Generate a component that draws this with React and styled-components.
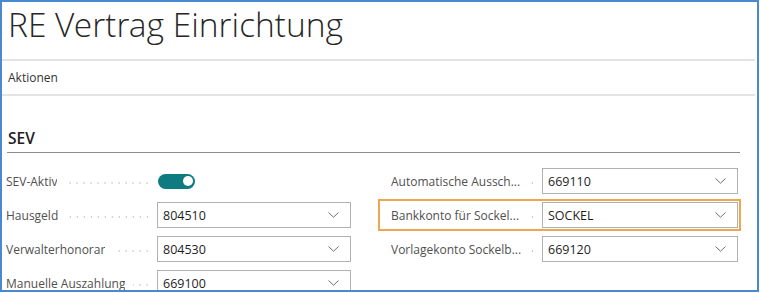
import React from 'react'
import styled, { createGlobalStyle } from 'styled-components'

const GlobalStyle = createGlobalStyle`
	html, body {
		margin: 0;
		padding: 0;
		background: #fff;
	}
	body {
		font-family: "Open Sans", "Noto Sans", Arial, sans-serif;
	}
`

const Frame = styled.div`
	box-sizing: border-box;
	width: 759px;
	height: 292px;
	border: 2px solid #4a89d0;
	background: #fff;
	overflow: hidden;
`

const Title = styled.h1`
	margin: 0;
	box-sizing: border-box;
	height: 57px;
	padding: 2px 0 0 6px;
	font-family: "Open Sans Light", "Lato Light", "Open Sans", sans-serif;
	font-size: 33.5px;
	font-weight: 300;
	line-height: 40px;
	color: #262626;
`

const Divider = styled.div`
	height: 2px;
	margin-right: 2px;
	background: #e4e4e6;
`

const ActionBar = styled.div`
	display: flex;
	align-items: center;
	height: 33px;
	padding-left: 6px;
	font-size: 12px;
	color: #333;
`

const Section = styled.section``

const SectionTitle = styled.h2`
	margin: 32px 17px 0 5px;
	padding: 0 0 4px 1px;
	font-size: 15.5px;
	font-weight: 600;
	line-height: 20px;
	color: #212121;
	border-bottom: 1px solid #8c8c8c;
`

const Fields = styled.div`
	display: grid;
	grid-template-columns: 352px 363px;
	column-gap: 24px;
	margin-top: 12px;
`

const Column = styled.div`
	display: flex;
	flex-direction: column;
	gap: 2px;
`

const Row = styled.div`
	display: flex;
	align-items: center;
	box-sizing: border-box;
	height: 32px;
	padding: 0 1px 0 ${p => p.$inset}px;
	border: 2px solid ${p => (p.$focused ? '#f0a650' : 'transparent')};
`

const Label = styled.div`
	display: flex;
	align-items: center;
	align-self: stretch;
	flex-shrink: 0;
	width: 151px;
`

const LabelText = styled.span`
	max-width: 131px;
	overflow: hidden;
	white-space: nowrap;
	text-overflow: ellipsis;
	font-size: 12px;
	color: #505050;
`

const Leader = styled.span`
	flex: 1;
	align-self: stretch;
	margin: 0 6px 0 8px;
	background-image: radial-gradient(circle 1px at center, #c6c6c6 0, #c6c6c6 0.6px, transparent 1px);
	background-size: 7px 6px;
	background-repeat: repeat-x;
	background-position: right 58%;
`

const Lookup = styled.div`
	flex: 1;
	display: flex;
	align-items: center;
	justify-content: space-between;
	box-sizing: border-box;
	height: 26px;
	padding: 0 11px 0 5px;
	border: 1px solid #b1b1b1;
	font-size: 12.5px;
	color: #1e1e1e;
`

const Toggle = styled.span`
	position: relative;
	width: 37px;
	height: 15px;
	margin-left: 1px;
	border-radius: 8px;
	background: ${p => (p.$on ? '#0e7b80' : '#8a8a8a')};

	&::after {
		content: '';
		position: absolute;
		top: 2.5px;
		${p => (p.$on ? 'right: 2px;' : 'left: 2px;')}
		width: 10px;
		height: 10px;
		border-radius: 50%;
		background: #fff;
	}
`

const Chevron = () => (
	<svg width="11" height="6" viewBox="0 0 11 6" fill="none">
		<path d="M0.5 0.5 L5.5 5.2 L10.5 0.5" stroke="#6f6f6f" strokeWidth="1" />
	</svg>
)

const Field = ({ label, value, toggle, inset, focused }) => (
	<Row $inset={inset} $focused={focused}>
		<Label>
			<LabelText>{label}</LabelText>
			<Leader />
		</Label>
		{toggle ? (
			<Toggle $on={value} />
		) : (
			<Lookup>
				{value}
				<Chevron />
			</Lookup>
		)}
	</Row>
)

const leftFields = [
	{ label: 'SEV-Aktiv', value: true, toggle: true },
	{ label: 'Hausgeld', value: '804510' },
	{ label: 'Verwalterhonorar', value: '804530' },
	{ label: 'Manuelle Auszahlung', value: '669100' },
]

const rightFields = [
	{ label: 'Automatische Aussch...', value: '669110' },
	{ label: 'Bankkonto für Sockel...', value: 'SOCKEL', focused: true },
	{ label: 'Vorlagekonto Sockelb...', value: '669120' },
]

export default function App() {
	return (
		<>
			<GlobalStyle />
			<Frame>
				<Title>RE Vertrag Einrichtung</Title>
				<Divider />
				<ActionBar>Aktionen</ActionBar>
				<Divider />
				<Section>
					<SectionTitle>SEV</SectionTitle>
					<Fields>
						<Column>
							{leftFields.map(f => <Field key={f.label} inset={2} {...f} />)}
						</Column>
						<Column>
							{rightFields.map(f => <Field key={f.label} inset={11} {...f} />)}
						</Column>
					</Fields>
				</Section>
			</Frame>
		</>
	)
}
